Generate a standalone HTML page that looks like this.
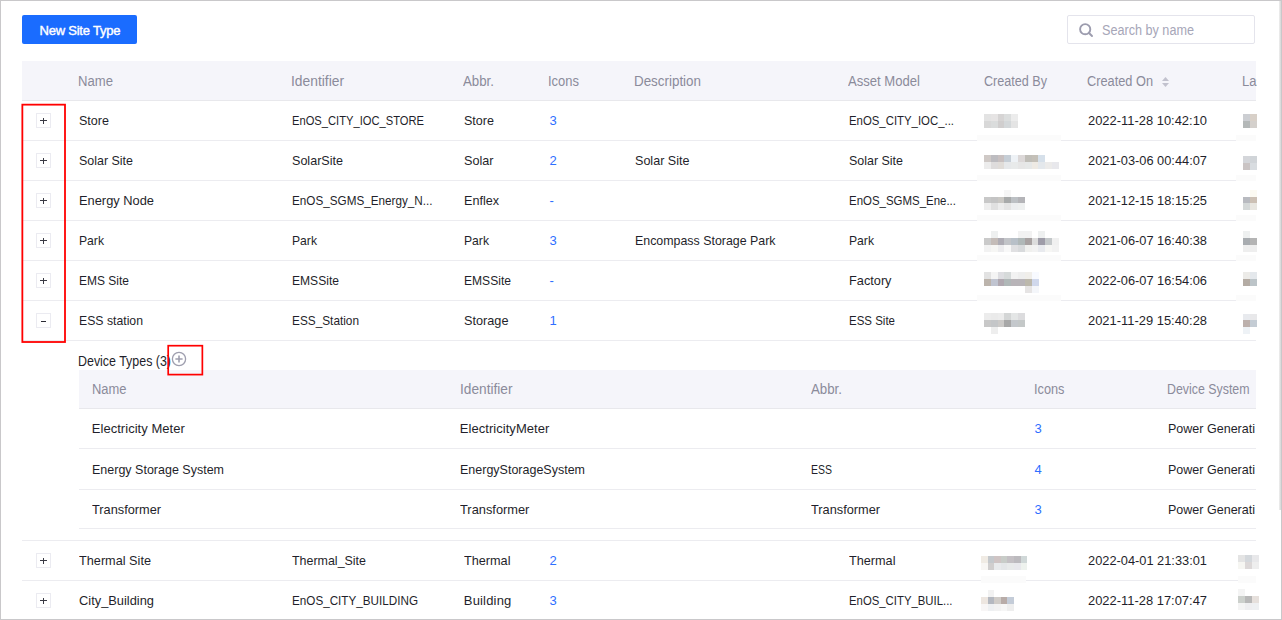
<!DOCTYPE html>
<html><head><meta charset="utf-8">
<style>
html,body{margin:0;padding:0}
body{width:1282px;height:620px;position:relative;overflow:hidden;background:#fff;font-family:"Liberation Sans",sans-serif;font-size:13px}
.t{position:absolute;white-space:nowrap;line-height:15px;font-size:13px}
.ln{position:absolute;height:1px}
.eb{position:absolute;left:36px;width:13px;height:13px;border:1px solid #ebebf1;background:#fff}
.eb .h{position:absolute;left:3px;top:6px;width:7px;height:1px;background:#3a3a44}
.eb .v{position:absolute;left:6px;top:4px;width:1px;height:6px;background:#3a3a44}
.m{position:absolute}
.eb .mi{position:absolute;left:4px;top:7px;width:5px;height:1px;background:#2a2a33}
</style></head><body>
<div style="position:absolute;left:0;top:0;width:1282px;height:620px;box-sizing:border-box;border:1px solid #c9c8ca"></div>
<div style="position:absolute;left:1279px;top:1px;width:2px;height:509px;background:linear-gradient(90deg,#f0f0f0,#d6d6d6)"></div>
<div style="position:absolute;left:22px;top:15px;width:115px;height:29px;background:#1a6cff;border-radius:2px"></div>
<span class="t" style="left:39.5px;top:22.5px;color:#fff;letter-spacing:-0.22px;-webkit-text-stroke:0.4px #fff">New Site Type</span>
<div style="position:absolute;left:1067px;top:15px;width:186px;height:27px;border:1px solid #e4e4ec;border-radius:2px;background:#fff"></div>
<svg style="position:absolute;left:1078px;top:22px" width="16" height="16" viewBox="0 0 16 16"><circle cx="7.2" cy="7.2" r="5.1" fill="none" stroke="#9c9cae" stroke-width="1.9"/><path d="M11 11 L14 14" stroke="#9c9cae" stroke-width="1.9" stroke-linecap="round"/></svg>
<span class="t" style="left:1101.8px;top:23px;color:#a6a6b8;font-size:14px;transform:scaleX(0.902);transform-origin:0 0">Search by name</span>
<div style="position:absolute;left:22px;top:61px;width:1234px;height:39px;background:#f5f5fa"></div><div class="ln" style="left:22px;top:100px;width:1234px;background:#e8e8ec"></div><div class="ln" style="left:22px;top:140px;width:955px;background:#ececf0"></div><div class="ln" style="left:1061px;top:140px;width:175px;background:#ececf0"></div><div class="m" style="left:977px;top:134.7px;width:84px;height:6.8px;background:#fbfbfb"></div><div class="m" style="left:1236px;top:134.7px;width:20px;height:6.8px;background:#fbfbfb"></div><div class="ln" style="left:22px;top:180px;width:955px;background:#ececf0"></div><div class="ln" style="left:1061px;top:180px;width:175px;background:#ececf0"></div><div class="m" style="left:977px;top:174.7px;width:84px;height:6.8px;background:#fbfbfb"></div><div class="m" style="left:1236px;top:174.7px;width:20px;height:6.8px;background:#fbfbfb"></div><div class="ln" style="left:22px;top:220px;width:955px;background:#ececf0"></div><div class="ln" style="left:1061px;top:220px;width:175px;background:#ececf0"></div><div class="m" style="left:977px;top:214.7px;width:84px;height:6.8px;background:#fbfbfb"></div><div class="m" style="left:1236px;top:214.7px;width:20px;height:6.8px;background:#fbfbfb"></div><div class="ln" style="left:22px;top:260px;width:955px;background:#ececf0"></div><div class="ln" style="left:1061px;top:260px;width:175px;background:#ececf0"></div><div class="m" style="left:977px;top:254.7px;width:84px;height:6.8px;background:#fbfbfb"></div><div class="m" style="left:1236px;top:254.7px;width:20px;height:6.8px;background:#fbfbfb"></div><div class="ln" style="left:22px;top:300px;width:955px;background:#ececf0"></div><div class="ln" style="left:1061px;top:300px;width:175px;background:#ececf0"></div><div class="m" style="left:977px;top:294.7px;width:84px;height:6.8px;background:#fbfbfb"></div><div class="m" style="left:1236px;top:294.7px;width:20px;height:6.8px;background:#fbfbfb"></div><div class="ln" style="left:22px;top:340px;width:1234px;background:#ececf0"></div><div class="ln" style="left:22px;top:540px;width:1234px;background:#ececf0"></div><div class="ln" style="left:22px;top:580px;width:959px;background:#ececf0"></div><div class="ln" style="left:1026px;top:580px;width:212px;background:#ececf0"></div><div class="m" style="left:981px;top:576px;width:45px;height:6.6px;background:#fbfbfb"></div><div class="m" style="left:1238px;top:576px;width:18px;height:6.9px;background:#fbfbfb"></div><div style="position:absolute;left:79px;top:370px;width:1177px;height:38px;background:#f5f5fa"></div><div class="ln" style="left:79px;top:408px;width:1177px;background:#e8e8ec"></div><div class="ln" style="left:79px;top:448px;width:1177px;background:#ececf0"></div><div class="ln" style="left:79px;top:489px;width:1177px;background:#ececf0"></div><div class="ln" style="left:79px;top:528px;width:1177px;background:#ececf0"></div><div class="eb" style="top:113px"><div class="h"></div><div class="v"></div></div><div class="eb" style="top:153px"><div class="h"></div><div class="v"></div></div><div class="eb" style="top:193px"><div class="h"></div><div class="v"></div></div><div class="eb" style="top:233px"><div class="h"></div><div class="v"></div></div><div class="eb" style="top:273px"><div class="h"></div><div class="v"></div></div><div class="eb" style="top:313px"><div class="mi"></div></div><div class="eb" style="top:553px"><div class="h"></div><div class="v"></div></div><div class="eb" style="top:593px"><div class="h"></div><div class="v"></div></div><div class="m" style="left:984.0px;top:114.0px;width:7.1px;height:7.1px;background:#e3e3e3"></div><div class="m" style="left:990.8px;top:114.0px;width:7.1px;height:7.1px;background:#e6e4e4"></div><div class="m" style="left:997.6px;top:114.0px;width:7.1px;height:7.1px;background:#d6d4d4"></div><div class="m" style="left:1004.4px;top:114.0px;width:7.1px;height:7.1px;background:#dcdede"></div><div class="m" style="left:1011.2px;top:114.0px;width:7.1px;height:7.1px;background:#ececec"></div><div class="m" style="left:984.0px;top:120.8px;width:7.1px;height:7.1px;background:#d8d8d8"></div><div class="m" style="left:990.8px;top:120.8px;width:7.1px;height:7.1px;background:#dadcdc"></div><div class="m" style="left:997.6px;top:120.8px;width:7.1px;height:7.1px;background:#d0cece"></div><div class="m" style="left:1004.4px;top:120.8px;width:7.1px;height:7.1px;background:#d4d8da"></div><div class="m" style="left:1011.2px;top:120.8px;width:7.1px;height:7.1px;background:#e4e4e4"></div><div class="m" style="left:984.0px;top:155.4px;width:7.1px;height:7.1px;background:#cfc9c6"></div><div class="m" style="left:990.8px;top:155.4px;width:7.1px;height:7.1px;background:#bdbcc0"></div><div class="m" style="left:997.6px;top:155.4px;width:7.1px;height:7.1px;background:#c8c0c0"></div><div class="m" style="left:1004.4px;top:155.4px;width:7.1px;height:7.1px;background:#c6ced6"></div><div class="m" style="left:1011.2px;top:155.4px;width:7.1px;height:7.1px;background:#eef2f6"></div><div class="m" style="left:1018.0px;top:155.4px;width:7.1px;height:7.1px;background:#dcd8d8"></div><div class="m" style="left:1024.8px;top:155.4px;width:7.1px;height:7.1px;background:#c0beb8"></div><div class="m" style="left:1031.6px;top:155.4px;width:7.1px;height:7.1px;background:#c4c0b8"></div><div class="m" style="left:1038.4px;top:155.4px;width:7.1px;height:7.1px;background:#d6e0ea"></div><div class="m" style="left:984.0px;top:162.2px;width:7.1px;height:7.1px;background:#ececec"></div><div class="m" style="left:990.8px;top:162.2px;width:7.1px;height:7.1px;background:#dedcdc"></div><div class="m" style="left:997.6px;top:162.2px;width:7.1px;height:7.1px;background:#e0dcd8"></div><div class="m" style="left:1004.4px;top:162.2px;width:7.1px;height:7.1px;background:#e6e8ea"></div><div class="m" style="left:1011.2px;top:162.2px;width:7.1px;height:7.1px;background:#e8eaea"></div><div class="m" style="left:1018.0px;top:162.2px;width:7.1px;height:7.1px;background:#e6e6e6"></div><div class="m" style="left:1024.8px;top:162.2px;width:7.1px;height:7.1px;background:#e6e8e8"></div><div class="m" style="left:1031.6px;top:162.2px;width:7.1px;height:7.1px;background:#eeeae4"></div><div class="m" style="left:1038.4px;top:162.2px;width:7.1px;height:7.1px;background:#e4e8ec"></div><div class="m" style="left:1045.2px;top:162.2px;width:7.1px;height:7.1px;background:#ecebea"></div><div class="m" style="left:1052.0px;top:162.2px;width:7.1px;height:7.1px;background:#e8e8ec"></div><div class="m" style="left:1004.4px;top:189.8px;width:7.1px;height:7.1px;background:#f6f6f6"></div><div class="m" style="left:984.0px;top:196.6px;width:7.1px;height:7.1px;background:#c8c8c8"></div><div class="m" style="left:990.8px;top:196.6px;width:7.1px;height:7.1px;background:#c4c4c4"></div><div class="m" style="left:997.6px;top:196.6px;width:7.1px;height:7.1px;background:#cac8c4"></div><div class="m" style="left:1004.4px;top:196.6px;width:7.1px;height:7.1px;background:#a8aaaa"></div><div class="m" style="left:1011.2px;top:196.6px;width:7.1px;height:7.1px;background:#bcc0c4"></div><div class="m" style="left:1018.0px;top:196.6px;width:7.1px;height:7.1px;background:#b4b4b8"></div><div class="m" style="left:984.0px;top:203.4px;width:7.1px;height:7.1px;background:#eeeeee"></div><div class="m" style="left:990.8px;top:203.4px;width:7.1px;height:7.1px;background:#e0e0e0"></div><div class="m" style="left:997.6px;top:203.4px;width:7.1px;height:7.1px;background:#ececec"></div><div class="m" style="left:1004.4px;top:203.4px;width:7.1px;height:7.1px;background:#e4e4e4"></div><div class="m" style="left:1011.2px;top:203.4px;width:7.1px;height:7.1px;background:#eceef0"></div><div class="m" style="left:1018.0px;top:203.4px;width:7.1px;height:7.1px;background:#eef0f0"></div><div class="m" style="left:990.8px;top:231.2px;width:7.1px;height:7.1px;background:#eef0f0"></div><div class="m" style="left:1018.0px;top:231.2px;width:7.1px;height:7.1px;background:#f2f2f2"></div><div class="m" style="left:1024.8px;top:231.2px;width:7.1px;height:7.1px;background:#f2f2f2"></div><div class="m" style="left:1038.4px;top:231.2px;width:7.1px;height:7.1px;background:#eef0f0"></div><div class="m" style="left:984.0px;top:238.0px;width:7.1px;height:7.1px;background:#cacaca"></div><div class="m" style="left:990.8px;top:238.0px;width:7.1px;height:7.1px;background:#c4bcb8"></div><div class="m" style="left:997.6px;top:238.0px;width:7.1px;height:7.1px;background:#aeacb4"></div><div class="m" style="left:1004.4px;top:238.0px;width:7.1px;height:7.1px;background:#c2c4c8"></div><div class="m" style="left:1011.2px;top:238.0px;width:7.1px;height:7.1px;background:#b8c0c8"></div><div class="m" style="left:1018.0px;top:238.0px;width:7.1px;height:7.1px;background:#b0b8b8"></div><div class="m" style="left:1024.8px;top:238.0px;width:7.1px;height:7.1px;background:#a8a2a2"></div><div class="m" style="left:1031.6px;top:238.0px;width:7.1px;height:7.1px;background:#dcdcdc"></div><div class="m" style="left:1038.4px;top:238.0px;width:7.1px;height:7.1px;background:#9e9ca8"></div><div class="m" style="left:1045.2px;top:238.0px;width:7.1px;height:7.1px;background:#c4c8ca"></div><div class="m" style="left:1052.0px;top:238.0px;width:7.1px;height:7.1px;background:#f0f0f0"></div><div class="m" style="left:984.0px;top:244.8px;width:7.1px;height:7.1px;background:#f2f2f2"></div><div class="m" style="left:990.8px;top:244.8px;width:7.1px;height:7.1px;background:#f6f6f4"></div><div class="m" style="left:997.6px;top:244.8px;width:7.1px;height:7.1px;background:#ececee"></div><div class="m" style="left:1004.4px;top:244.8px;width:7.1px;height:7.1px;background:#f8f8f8"></div><div class="m" style="left:1011.2px;top:244.8px;width:7.1px;height:7.1px;background:#e0e0e2"></div><div class="m" style="left:1018.0px;top:244.8px;width:7.1px;height:7.1px;background:#d8dadc"></div><div class="m" style="left:1024.8px;top:244.8px;width:7.1px;height:7.1px;background:#f0f0ee"></div><div class="m" style="left:1031.6px;top:244.8px;width:7.1px;height:7.1px;background:#f2f2f2"></div><div class="m" style="left:1038.4px;top:244.8px;width:7.1px;height:7.1px;background:#e8eaee"></div><div class="m" style="left:1045.2px;top:244.8px;width:7.1px;height:7.1px;background:#f6f6f4"></div><div class="m" style="left:1052.0px;top:244.8px;width:7.1px;height:7.1px;background:#f2f2f2"></div><div class="m" style="left:984.0px;top:272.0px;width:7.1px;height:7.1px;background:#e2e2e2"></div><div class="m" style="left:990.8px;top:272.0px;width:7.1px;height:7.1px;background:#f4f4f4"></div><div class="m" style="left:997.6px;top:272.0px;width:7.1px;height:7.1px;background:#dedee2"></div><div class="m" style="left:1004.4px;top:272.0px;width:7.1px;height:7.1px;background:#d6dada"></div><div class="m" style="left:1011.2px;top:272.0px;width:7.1px;height:7.1px;background:#f2f2f2"></div><div class="m" style="left:1018.0px;top:272.0px;width:7.1px;height:7.1px;background:#eeeeee"></div><div class="m" style="left:1024.8px;top:272.0px;width:7.1px;height:7.1px;background:#f0eeea"></div><div class="m" style="left:1031.6px;top:272.0px;width:7.1px;height:7.1px;background:#f8faff"></div><div class="m" style="left:984.0px;top:278.8px;width:7.1px;height:7.1px;background:#bcb4ac"></div><div class="m" style="left:990.8px;top:278.8px;width:7.1px;height:7.1px;background:#c0c4d0"></div><div class="m" style="left:997.6px;top:278.8px;width:7.1px;height:7.1px;background:#b0a8b0"></div><div class="m" style="left:1004.4px;top:278.8px;width:7.1px;height:7.1px;background:#b0b8b8"></div><div class="m" style="left:1011.2px;top:278.8px;width:7.1px;height:7.1px;background:#b8b4b8"></div><div class="m" style="left:1018.0px;top:278.8px;width:7.1px;height:7.1px;background:#b8b4b8"></div><div class="m" style="left:1024.8px;top:278.8px;width:7.1px;height:7.1px;background:#bcb8ac"></div><div class="m" style="left:1031.6px;top:278.8px;width:7.1px;height:7.1px;background:#d0d8ec"></div><div class="m" style="left:1024.8px;top:285.6px;width:7.1px;height:7.1px;background:#e6e4e4"></div><div class="m" style="left:1031.6px;top:285.6px;width:7.1px;height:7.1px;background:#f4f6fa"></div><div class="m" style="left:984.0px;top:312.9px;width:7.1px;height:7.1px;background:#ececec"></div><div class="m" style="left:990.8px;top:312.9px;width:7.1px;height:7.1px;background:#eaeaea"></div><div class="m" style="left:997.6px;top:312.9px;width:7.1px;height:7.1px;background:#ececec"></div><div class="m" style="left:1004.4px;top:312.9px;width:7.1px;height:7.1px;background:#d4d6d6"></div><div class="m" style="left:1011.2px;top:312.9px;width:7.1px;height:7.1px;background:#e4e6e6"></div><div class="m" style="left:1018.0px;top:312.9px;width:7.1px;height:7.1px;background:#dcdcde"></div><div class="m" style="left:984.0px;top:319.7px;width:7.1px;height:7.1px;background:#c8c8c8"></div><div class="m" style="left:990.8px;top:319.7px;width:7.1px;height:7.1px;background:#c4c6c8"></div><div class="m" style="left:997.6px;top:319.7px;width:7.1px;height:7.1px;background:#cccac8"></div><div class="m" style="left:1004.4px;top:319.7px;width:7.1px;height:7.1px;background:#a8a8a8"></div><div class="m" style="left:1011.2px;top:319.7px;width:7.1px;height:7.1px;background:#c4c8cc"></div><div class="m" style="left:1018.0px;top:319.7px;width:7.1px;height:7.1px;background:#c4c8c8"></div><div class="m" style="left:990.8px;top:326.5px;width:7.1px;height:7.1px;background:#eeeeee"></div><div class="m" style="left:981.0px;top:555.9px;width:6.9px;height:7.1px;background:#f0ebe4"></div><div class="m" style="left:987.6px;top:555.9px;width:6.9px;height:7.1px;background:#c4c8cc"></div><div class="m" style="left:994.2px;top:555.9px;width:6.9px;height:7.1px;background:#cfc4c4"></div><div class="m" style="left:1000.8px;top:555.9px;width:6.9px;height:7.1px;background:#c8ccc8"></div><div class="m" style="left:1007.4px;top:555.9px;width:6.9px;height:7.1px;background:#c4c0c4"></div><div class="m" style="left:1014.0px;top:555.9px;width:6.9px;height:7.1px;background:#bcbabe"></div><div class="m" style="left:1020.6px;top:555.9px;width:6.9px;height:7.1px;background:#d0d8d8"></div><div class="m" style="left:981.0px;top:562.7px;width:6.9px;height:7.1px;background:#f8f6f4"></div><div class="m" style="left:987.6px;top:562.7px;width:6.9px;height:7.1px;background:#d0cece"></div><div class="m" style="left:994.2px;top:562.7px;width:6.9px;height:7.1px;background:#e8eaec"></div><div class="m" style="left:1000.8px;top:562.7px;width:6.9px;height:7.1px;background:#e4e6e8"></div><div class="m" style="left:1007.4px;top:562.7px;width:6.9px;height:7.1px;background:#e8eaea"></div><div class="m" style="left:1014.0px;top:562.7px;width:6.9px;height:7.1px;background:#e8e8ec"></div><div class="m" style="left:1020.6px;top:562.7px;width:6.9px;height:7.1px;background:#eef2ee"></div><div class="m" style="left:987.6px;top:590.3px;width:6.9px;height:7.1px;background:#f2f2f2"></div><div class="m" style="left:981.0px;top:597.1px;width:6.9px;height:7.1px;background:#ede6e0"></div><div class="m" style="left:987.6px;top:597.1px;width:6.9px;height:7.1px;background:#b4b8c0"></div><div class="m" style="left:994.2px;top:597.1px;width:6.9px;height:7.1px;background:#d0ccc8"></div><div class="m" style="left:1000.8px;top:597.1px;width:6.9px;height:7.1px;background:#b8aca8"></div><div class="m" style="left:1007.4px;top:597.1px;width:6.9px;height:7.1px;background:#c4ccd8"></div><div class="m" style="left:981.0px;top:603.9px;width:6.9px;height:7.1px;background:#f8f6f6"></div><div class="m" style="left:987.6px;top:603.9px;width:6.9px;height:7.1px;background:#eef0f2"></div><div class="m" style="left:994.2px;top:603.9px;width:6.9px;height:7.1px;background:#f2f2f2"></div><div class="m" style="left:1000.8px;top:603.9px;width:6.9px;height:7.1px;background:#f6f6f6"></div><div class="m" style="left:1007.4px;top:603.9px;width:6.9px;height:7.1px;background:#eeeeee"></div><div class="m" style="left:1243.0px;top:114.1px;width:7.1px;height:7.1px;background:#ccced2"></div><div class="m" style="left:1249.8px;top:114.1px;width:7.1px;height:7.1px;background:#d8d0c8"></div><div class="m" style="left:1243.0px;top:120.9px;width:7.1px;height:7.1px;background:#b4b8b8"></div><div class="m" style="left:1249.8px;top:120.9px;width:7.1px;height:7.1px;background:#d4d0cc"></div><div class="m" style="left:1243.0px;top:155.8px;width:7.1px;height:7.1px;background:#d4d6da"></div><div class="m" style="left:1249.8px;top:155.8px;width:7.1px;height:7.1px;background:#d0d4d8"></div><div class="m" style="left:1243.0px;top:162.6px;width:7.1px;height:7.1px;background:#cac4c4"></div><div class="m" style="left:1249.8px;top:162.6px;width:7.1px;height:7.1px;background:#d8dce0"></div><div class="m" style="left:1249.8px;top:189.7px;width:7.1px;height:7.1px;background:#fcfaf2"></div><div class="m" style="left:1243.0px;top:196.5px;width:7.1px;height:7.1px;background:#b8bac0"></div><div class="m" style="left:1249.8px;top:196.5px;width:7.1px;height:7.1px;background:#ccc0b4"></div><div class="m" style="left:1243.0px;top:203.3px;width:7.1px;height:7.1px;background:#d4d8d8"></div><div class="m" style="left:1249.8px;top:203.3px;width:7.1px;height:7.1px;background:#e8e6e0"></div><div class="m" style="left:1243.0px;top:231.0px;width:7.1px;height:7.1px;background:#eef0f0"></div><div class="m" style="left:1243.0px;top:237.8px;width:7.1px;height:7.1px;background:#a8acb0"></div><div class="m" style="left:1249.8px;top:237.8px;width:7.1px;height:7.1px;background:#b4b4b4"></div><div class="m" style="left:1243.0px;top:244.6px;width:7.1px;height:7.1px;background:#eeeeee"></div><div class="m" style="left:1249.8px;top:244.6px;width:7.1px;height:7.1px;background:#eeeeee"></div><div class="m" style="left:1243.0px;top:272.3px;width:7.1px;height:7.1px;background:#ecebe8"></div><div class="m" style="left:1249.8px;top:272.3px;width:7.1px;height:7.1px;background:#e4e8ec"></div><div class="m" style="left:1243.0px;top:279.1px;width:7.1px;height:7.1px;background:#b4aca4"></div><div class="m" style="left:1249.8px;top:279.1px;width:7.1px;height:7.1px;background:#bcc4c8"></div><div class="m" style="left:1243.0px;top:313.6px;width:7.1px;height:7.1px;background:#e8eaee"></div><div class="m" style="left:1249.8px;top:313.6px;width:7.1px;height:7.1px;background:#e8e8ea"></div><div class="m" style="left:1243.0px;top:320.4px;width:7.1px;height:7.1px;background:#bcb0ac"></div><div class="m" style="left:1249.8px;top:320.4px;width:7.1px;height:7.1px;background:#c4ccd4"></div><div class="m" style="left:1243.0px;top:327.2px;width:7.1px;height:7.1px;background:#eef2f6"></div><div class="m" style="left:1238.3px;top:555.1px;width:7.2px;height:7.2px;background:#e4e4e4"></div><div class="m" style="left:1245.2px;top:555.1px;width:7.2px;height:7.2px;background:#d4d8dc"></div><div class="m" style="left:1252.1px;top:555.1px;width:7.2px;height:7.2px;background:#e8e8ea"></div><div class="m" style="left:1238.3px;top:562.0px;width:7.2px;height:7.2px;background:#f6f6f2"></div><div class="m" style="left:1245.2px;top:562.0px;width:7.2px;height:7.2px;background:#dcd8d8"></div><div class="m" style="left:1252.1px;top:562.0px;width:7.2px;height:7.2px;background:#eeeeee"></div><div class="m" style="left:1238.3px;top:589.2px;width:7.2px;height:7.2px;background:#f4f4f4"></div><div class="m" style="left:1238.3px;top:596.1px;width:7.2px;height:7.2px;background:#ccd0cc"></div><div class="m" style="left:1245.2px;top:596.1px;width:7.2px;height:7.2px;background:#b8b8b8"></div><div class="m" style="left:1252.1px;top:596.1px;width:7.2px;height:7.2px;background:#e6e0dc"></div><div class="m" style="left:1238.3px;top:603.0px;width:7.2px;height:7.2px;background:#f4f4f4"></div><div class="m" style="left:1245.2px;top:603.0px;width:7.2px;height:7.2px;background:#eeeef0"></div><div class="m" style="left:1252.1px;top:603.0px;width:7.2px;height:7.2px;background:#eef0f2"></div>
<svg style="position:absolute;left:1161px;top:76px" width="9" height="12" viewBox="0 0 9 12"><path d="M4.5 1 L8 5 L1 5 Z" fill="#c2c2ce"/><path d="M1 7 L8 7 L4.5 11 Z" fill="#c2c2ce"/></svg>
<span class="t" style="left:78.0px;top:74px;color:#8b8b9b;font-size:14px;transform:scaleX(0.9368);transform-origin:0 0">Name</span>
<span class="t" style="left:291.0px;top:74px;color:#8b8b9b;font-size:14px;transform:scaleX(0.9869);transform-origin:0 0">Identifier</span>
<span class="t" style="left:463.0px;top:74px;color:#8b8b9b;font-size:14px;transform:scaleX(0.9479);transform-origin:0 0">Abbr.</span>
<span class="t" style="left:548.0px;top:74px;color:#8b8b9b;font-size:14px;transform:scaleX(0.9262);transform-origin:0 0">Icons</span>
<span class="t" style="left:634.0px;top:74px;color:#8b8b9b;font-size:14px;transform:scaleX(0.9567);transform-origin:0 0">Description</span>
<span class="t" style="left:848.0px;top:74px;color:#8b8b9b;font-size:14px;transform:scaleX(0.9345);transform-origin:0 0">Asset Model</span>
<span class="t" style="left:984.0px;top:74px;color:#8b8b9b;font-size:14px;transform:scaleX(0.8994);transform-origin:0 0">Created By</span>
<span class="t" style="left:1087.0px;top:74px;color:#8b8b9b;font-size:14px;transform:scaleX(0.9119);transform-origin:0 0">Created On</span>
<span class="t" style="left:78.8px;top:113px;color:#1f1f2b;transform:scaleX(0.9653);transform-origin:0 0">Store</span>
<span class="t" style="left:291.8px;top:113px;color:#1f1f2b;transform:scaleX(0.8591);transform-origin:0 0">EnOS_CITY_IOC_STORE</span>
<span class="t" style="left:463.8px;top:113px;color:#1f1f2b;transform:scaleX(0.9653);transform-origin:0 0">Store</span>
<span class="t" style="left:549.4px;top:113px;color:#2f6fff">3</span>
<span class="t" style="left:848.8px;top:113px;color:#1f1f2b;transform:scaleX(0.8755);transform-origin:0 0">EnOS_CITY_IOC_...</span>
<span class="t" style="left:1087.8px;top:113px;color:#1f1f2b;transform:scaleX(0.9937);transform-origin:0 0">2022-11-28 10:42:10</span>
<span class="t" style="left:78.8px;top:153px;color:#1f1f2b;transform:scaleX(0.9579);transform-origin:0 0">Solar Site</span>
<span class="t" style="left:291.8px;top:153px;color:#1f1f2b;transform:scaleX(0.9668);transform-origin:0 0">SolarSite</span>
<span class="t" style="left:463.8px;top:153px;color:#1f1f2b;transform:scaleX(0.9717);transform-origin:0 0">Solar</span>
<span class="t" style="left:549.4px;top:153px;color:#2f6fff">2</span>
<span class="t" style="left:634.8px;top:153px;color:#1f1f2b;transform:scaleX(0.9667);transform-origin:0 0">Solar Site</span>
<span class="t" style="left:848.8px;top:153px;color:#1f1f2b;transform:scaleX(0.9579);transform-origin:0 0">Solar Site</span>
<span class="t" style="left:1087.8px;top:153px;color:#1f1f2b;transform:scaleX(0.9858);transform-origin:0 0">2021-03-06 00:44:07</span>
<span class="t" style="left:78.8px;top:193px;color:#1f1f2b;transform:scaleX(0.9883);transform-origin:0 0">Energy Node</span>
<span class="t" style="left:291.8px;top:193px;color:#1f1f2b;transform:scaleX(0.9002);transform-origin:0 0">EnOS_SGMS_Energy_N...</span>
<span class="t" style="left:463.8px;top:193px;color:#1f1f2b;transform:scaleX(0.9684);transform-origin:0 0">Enflex</span>
<span class="t" style="left:549.4px;top:193px;color:#2f6fff">-</span>
<span class="t" style="left:848.8px;top:193px;color:#1f1f2b;transform:scaleX(0.8813);transform-origin:0 0">EnOS_SGMS_Ene...</span>
<span class="t" style="left:1087.8px;top:193px;color:#1f1f2b;transform:scaleX(0.9858);transform-origin:0 0">2021-12-15 18:15:25</span>
<span class="t" style="left:78.8px;top:233px;color:#1f1f2b;transform:scaleX(0.9351);transform-origin:0 0">Park</span>
<span class="t" style="left:291.8px;top:233px;color:#1f1f2b;transform:scaleX(0.9351);transform-origin:0 0">Park</span>
<span class="t" style="left:463.8px;top:233px;color:#1f1f2b;transform:scaleX(0.9351);transform-origin:0 0">Park</span>
<span class="t" style="left:549.4px;top:233px;color:#2f6fff">3</span>
<span class="t" style="left:634.8px;top:233px;color:#1f1f2b;transform:scaleX(0.9531);transform-origin:0 0">Encompass Storage Park</span>
<span class="t" style="left:848.8px;top:233px;color:#1f1f2b;transform:scaleX(0.9351);transform-origin:0 0">Park</span>
<span class="t" style="left:1087.8px;top:233px;color:#1f1f2b;transform:scaleX(0.9858);transform-origin:0 0">2021-06-07 16:40:38</span>
<span class="t" style="left:78.8px;top:273px;color:#1f1f2b;transform:scaleX(0.9227);transform-origin:0 0">EMS Site</span>
<span class="t" style="left:291.8px;top:273px;color:#1f1f2b;transform:scaleX(0.9293);transform-origin:0 0">EMSSite</span>
<span class="t" style="left:463.8px;top:273px;color:#1f1f2b;transform:scaleX(0.9293);transform-origin:0 0">EMSSite</span>
<span class="t" style="left:549.4px;top:273px;color:#2f6fff">-</span>
<span class="t" style="left:848.8px;top:273px;color:#1f1f2b;transform:scaleX(0.9805);transform-origin:0 0">Factory</span>
<span class="t" style="left:1087.8px;top:273px;color:#1f1f2b;transform:scaleX(0.9858);transform-origin:0 0">2022-06-07 16:54:06</span>
<span class="t" style="left:78.8px;top:313px;color:#1f1f2b;transform:scaleX(0.9420);transform-origin:0 0">ESS station</span>
<span class="t" style="left:291.8px;top:313px;color:#1f1f2b;transform:scaleX(0.9089);transform-origin:0 0">ESS_Station</span>
<span class="t" style="left:463.8px;top:313px;color:#1f1f2b;transform:scaleX(0.9770);transform-origin:0 0">Storage</span>
<span class="t" style="left:549.4px;top:313px;color:#2f6fff">1</span>
<span class="t" style="left:848.8px;top:313px;color:#1f1f2b;transform:scaleX(0.8841);transform-origin:0 0">ESS Site</span>
<span class="t" style="left:1087.8px;top:313px;color:#1f1f2b;transform:scaleX(0.9937);transform-origin:0 0">2021-11-29 15:40:28</span>
<span class="t" style="left:78.8px;top:553px;color:#1f1f2b;transform:scaleX(0.9769);transform-origin:0 0">Thermal Site</span>
<span class="t" style="left:291.8px;top:553px;color:#1f1f2b;transform:scaleX(0.9572);transform-origin:0 0">Thermal_Site</span>
<span class="t" style="left:463.8px;top:553px;color:#1f1f2b;transform:scaleX(0.9751);transform-origin:0 0">Thermal</span>
<span class="t" style="left:549.4px;top:553px;color:#2f6fff">2</span>
<span class="t" style="left:848.8px;top:553px;color:#1f1f2b;transform:scaleX(0.9751);transform-origin:0 0">Thermal</span>
<span class="t" style="left:1087.8px;top:553px;color:#1f1f2b;transform:scaleX(0.9858);transform-origin:0 0">2022-04-01 21:33:01</span>
<span class="t" style="left:78.8px;top:593px;color:#1f1f2b;transform:scaleX(0.9885);transform-origin:0 0">City_Building</span>
<span class="t" style="left:291.8px;top:593px;color:#1f1f2b;transform:scaleX(0.8990);transform-origin:0 0">EnOS_CITY_BUILDING</span>
<span class="t" style="left:463.8px;top:593px;color:#1f1f2b;letter-spacing:0.176px">Building</span>
<span class="t" style="left:549.4px;top:593px;color:#2f6fff">3</span>
<span class="t" style="left:848.8px;top:593px;color:#1f1f2b;transform:scaleX(0.8734);transform-origin:0 0">EnOS_CITY_BUIL...</span>
<span class="t" style="left:1087.8px;top:593px;color:#1f1f2b;transform:scaleX(0.9937);transform-origin:0 0">2022-11-28 17:07:47</span>
<span class="t" style="left:78.0px;top:354px;color:#1f1f2b;font-size:14px;transform:scaleX(0.8876);transform-origin:0 0">Device Types (3)</span>
<span class="t" style="left:91.8px;top:382px;color:#8b8b9b;font-size:14px;transform:scaleX(0.9235);transform-origin:0 0">Name</span>
<span class="t" style="left:459.5px;top:382px;color:#8b8b9b;font-size:14px;transform:scaleX(0.9776);transform-origin:0 0">Identifier</span>
<span class="t" style="left:810.5px;top:382px;color:#8b8b9b;font-size:14px;transform:scaleX(0.9479);transform-origin:0 0">Abbr.</span>
<span class="t" style="left:1033.5px;top:382px;color:#8b8b9b;font-size:14px;transform:scaleX(0.9113);transform-origin:0 0">Icons</span>
<span class="t" style="left:1167.3px;top:382px;color:#8b8b9b;font-size:14px;transform:scaleX(0.8837);transform-origin:0 0">Device System</span>
<span class="t" style="left:91.8px;top:421px;color:#1f1f2b;letter-spacing:0.033px">Electricity Meter</span>
<span class="t" style="left:459.8px;top:421px;color:#1f1f2b;letter-spacing:0.043px">ElectricityMeter</span>
<span class="t" style="left:1034.4px;top:421px;color:#2f6fff">3</span>
<span class="t" style="left:1167.8px;top:421px;color:#1f1f2b;transform:scaleX(0.9632);transform-origin:0 0;width:91.4px;overflow:hidden">Power Generati</span>
<span class="t" style="left:91.8px;top:462px;color:#1f1f2b;transform:scaleX(0.9614);transform-origin:0 0">Energy Storage System</span>
<span class="t" style="left:459.8px;top:462px;color:#1f1f2b;transform:scaleX(0.9610);transform-origin:0 0">EnergyStorageSystem</span>
<span class="t" style="left:810.8px;top:462px;color:#1f1f2b;transform:scaleX(0.8072);transform-origin:0 0">ESS</span>
<span class="t" style="left:1034.4px;top:462px;color:#2f6fff">4</span>
<span class="t" style="left:1167.8px;top:462px;color:#1f1f2b;transform:scaleX(0.9632);transform-origin:0 0;width:91.4px;overflow:hidden">Power Generati</span>
<span class="t" style="left:91.8px;top:502px;color:#1f1f2b;transform:scaleX(0.9813);transform-origin:0 0">Transformer</span>
<span class="t" style="left:459.8px;top:502px;color:#1f1f2b;transform:scaleX(0.9870);transform-origin:0 0">Transformer</span>
<span class="t" style="left:810.8px;top:502px;color:#1f1f2b;transform:scaleX(0.9813);transform-origin:0 0">Transformer</span>
<span class="t" style="left:1034.4px;top:502px;color:#2f6fff">3</span>
<span class="t" style="left:1167.8px;top:502px;color:#1f1f2b;transform:scaleX(0.9632);transform-origin:0 0;width:91.4px;overflow:hidden">Power Generati</span>
<span class="t" style="left:1241.5px;top:74px;color:#8b8b9b;font-size:14px;transform:scaleX(0.93);transform-origin:0 0;width:15.6px;overflow:hidden">Last</span>
<svg style="position:absolute;left:171px;top:351px" width="16" height="16" viewBox="0 0 16 16"><circle cx="8" cy="8" r="6.6" fill="none" stroke="#9e9eae" stroke-width="1.3"/><path d="M8 4.4 V11.6 M4.4 8 H11.6" stroke="#9e9eae" stroke-width="1.6"/></svg>
<svg style="position:absolute;left:0;top:0" width="1282" height="620" viewBox="0 0 1282 620"><rect x="22.35" y="104.66" width="42.65" height="237.34" fill="none" stroke="#ff0000" stroke-width="1.8"/><rect x="168.2" y="345.7" width="34.16" height="28.9" fill="none" stroke="#ff0000" stroke-width="1.7"/></svg>
</body></html>
